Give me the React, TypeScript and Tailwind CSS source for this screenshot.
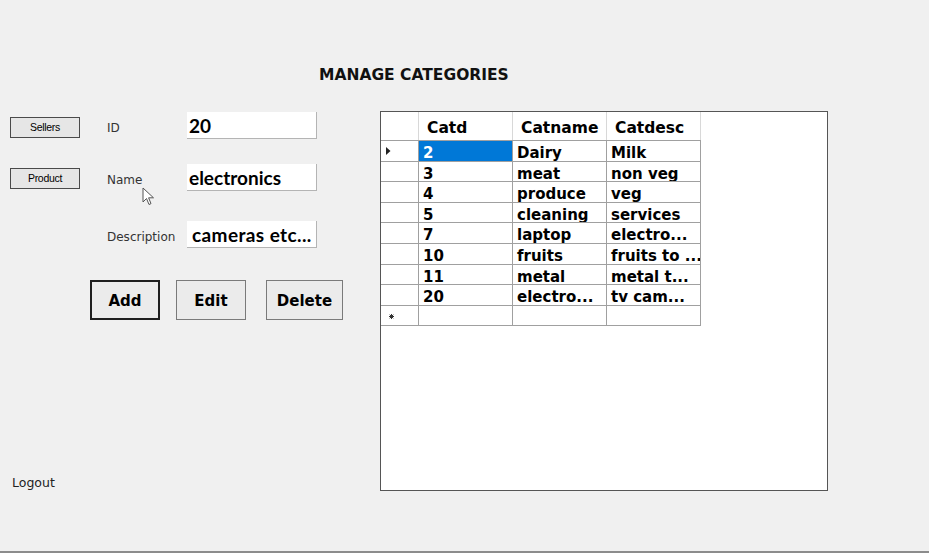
import React from "react";

type Row = { id: string; name: string; desc: string };

const rows: Row[] = [
  { id: "2", name: "Dairy", desc: "Milk" },
  { id: "3", name: "meat", desc: "non veg" },
  { id: "4", name: "produce", desc: "veg" },
  { id: "5", name: "cleaning", desc: "services" },
  { id: "7", name: "laptop", desc: "electro..." },
  { id: "10", name: "fruits", desc: "fruits to ..." },
  { id: "11", name: "metal", desc: "metal t..." },
  { id: "20", name: "electro...", desc: "tv cam..." },
];

const NavButton = ({ label, className = "" }: { label: string; className?: string }) => (
  <button
    className={`ml-[10px] h-[21px] w-[70px] border border-[#4a4a4a] bg-[#e6e6e6] font-['Liberation_Sans'] text-[10.5px] leading-none tracking-[-0.3px] text-black ${className}`}
  >
    {label}
  </button>
);

const Field = ({ label, value, pad = "pl-[2px]" }: { label: string; value: string; pad?: string }) => (
  <>
    <div className="ml-[27px] w-[80px] pt-[3px] text-[12px] leading-[27px] text-[#333]">{label}</div>
    <div
      className={`h-[27px] w-[130px] overflow-hidden whitespace-nowrap border-b border-r border-[#b4b4b4] bg-white ${pad} font-['Lato'] text-[19px] font-bold leading-[27px] text-black`}
    >
      {value}
    </div>
  </>
);

const ActionButton = ({ label, w, strong }: { label: string; w: string; strong?: boolean }) => (
  <button
    className={`h-[40px] ${w} ${
      strong ? "border-2 border-[#1e1e1e]" : "border border-[#7a7a7a]"
    } bg-[#ebebeb] pt-[2px] text-[15px] font-bold text-black`}
  >
    {label}
  </button>
);

export default function App() {
  return (
    <div className="relative h-[553px] w-[929px] overflow-hidden border-b-2 border-[#8c8c8c] bg-[#f0f0f0] font-['DejaVu_Sans',sans-serif]">
      <div className="pl-[319px] pt-[65px] text-[15.5px] font-bold leading-[20px] text-[#111]">
        MANAGE CATEGORIES
      </div>

      <div className="mt-[26px] flex">
        {/* left panel */}
        <div className="flex h-[380px] w-[380px] flex-col">
          <div className="mt-[1px] flex h-[27px] items-start">
            <NavButton label="Sellers" className="mt-[5px]" />
            <Field label="ID" value="20" />
          </div>
          <div className="mt-[25px] flex h-[27px] items-start">
            <NavButton label="Product" className="mt-[4px]" />
            <Field label="Name" value="electronics" />
          </div>
          <div className="mt-[30px] flex h-[27px] items-start pl-[80px]">
            <Field label="Description" value="cameras etc..." pad="pl-[5px] tracking-[0.4px]" />
          </div>
          <div className="mt-[32px] flex pl-[90px]">
            <ActionButton label="Add" w="w-[70px]" strong />
            <div className="ml-[16px]">
              <ActionButton label="Edit" w="w-[70px]" />
            </div>
            <div className="ml-[20px]">
              <ActionButton label="Delete" w="w-[77px]" />
            </div>
          </div>
          <div className="mb-[-2px] mt-auto pl-[12px] text-[12.5px] leading-[20px] text-[#222]">Logout</div>
        </div>

        {/* data grid */}
        <div className="h-[380px] w-[448px] border border-[#555] bg-white text-[15px] font-bold text-black">
          <div className="flex h-[29px] w-[320px] border-b border-[#a0a0a0]">
            <div className="w-[38px] border-r border-[#d8d8d8]" />
            {["Catd", "Catname", "Catdesc"].map((h) => (
              <div
                key={h}
                className="w-[94px] border-r border-[#d8d8d8] pl-[8px] pt-[2px] text-[15.5px] leading-[28px]"
              >
                {h}
              </div>
            ))}
          </div>
          {rows.map((r, i) => (
            <div key={r.id} className="flex h-[20.6px] w-[320px] border-b border-[#a0a0a0]">
              <div className="relative w-[38px] border-r border-[#a0a0a0]">
                {i === 0 && (
                  <svg className="absolute left-[5px] top-[6px]" width="5" height="8" viewBox="0 0 5 8">
                    <path d="M0 0 L4.5 4 L0 8 Z" fill="#222" />
                  </svg>
                )}
              </div>
              {[r.id, r.name, r.desc].map((v, j) => (
                <div
                  key={j}
                  className={`w-[94px] overflow-hidden whitespace-nowrap border-r border-[#a0a0a0] pl-[4px] pt-[2px] leading-[20px] ${
                    i === 0 && j === 0 ? "bg-[#0078d7] text-white" : ""
                  }`}
                >
                  {v}
                </div>
              ))}
            </div>
          ))}
          <div className="flex h-[20.6px] w-[320px] border-b border-[#a0a0a0]">
            <div className="relative w-[38px] border-r border-[#a0a0a0]">
              <svg className="absolute left-[8px] top-[8px]" width="5" height="5" viewBox="0 0 5 5">
                <path d="M2.5 0 V5 M0 2.5 H5 M0.7 0.7 L4.3 4.3 M4.3 0.7 L0.7 4.3" stroke="#333" strokeWidth="1" />
              </svg>
            </div>
            <div className="w-[94px] border-r border-[#a0a0a0]" />
            <div className="w-[94px] border-r border-[#a0a0a0]" />
            <div className="w-[94px] border-r border-[#a0a0a0]" />
          </div>
        </div>
      </div>

      {/* mouse pointer */}
      <svg className="absolute left-[142px] top-[187px]" width="13" height="20" viewBox="0 0 13 20">
        <path
          d="M1 1 L1 15 L4.5 11.5 L7 17.5 L9 16.6 L6.6 10.8 L11.5 10.8 Z"
          fill="#fff"
          stroke="#555"
          strokeWidth="1"
          strokeLinejoin="round"
        />
      </svg>
    </div>
  );
}
